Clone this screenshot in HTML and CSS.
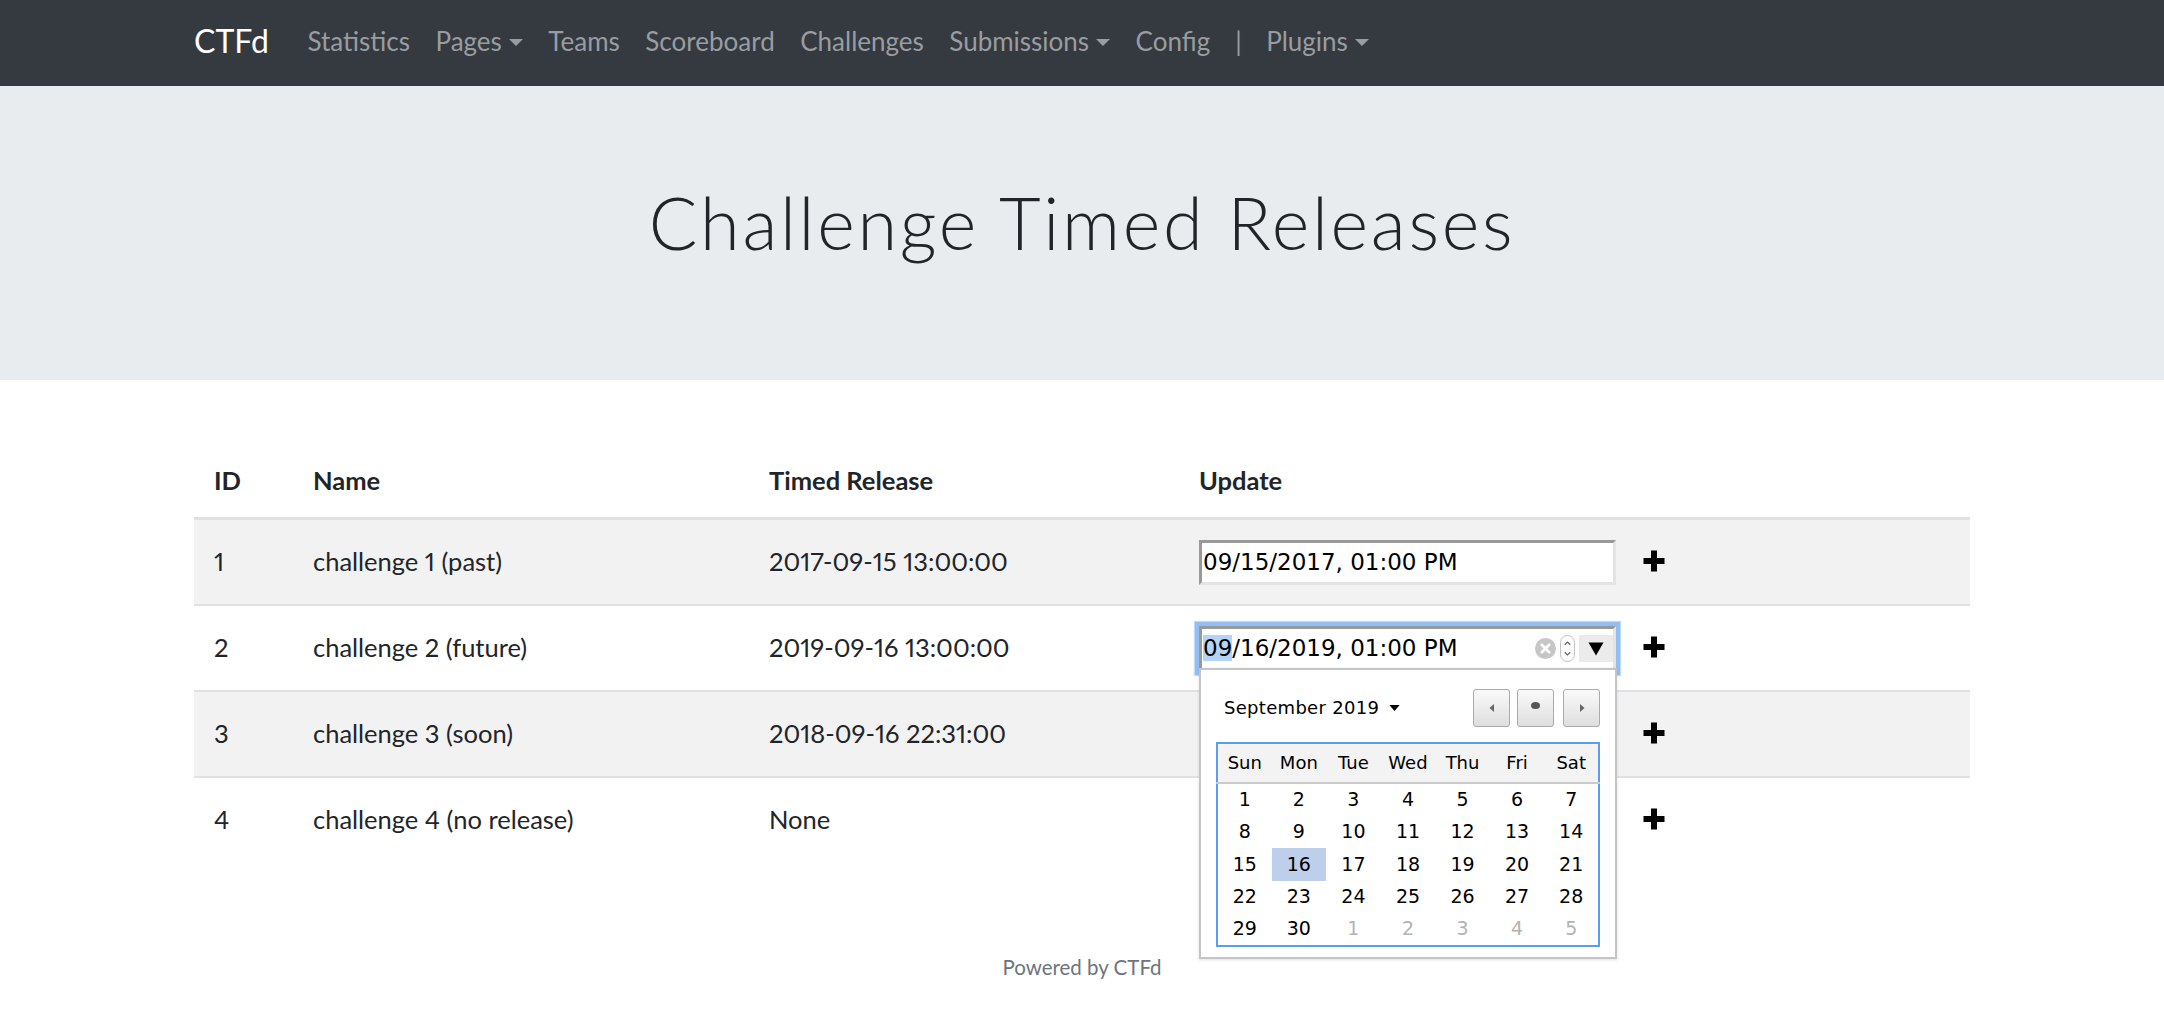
FILE: index.html
```html
<!DOCTYPE html>
<html lang="en">
<head>
<meta charset="utf-8">
<title>Challenge Timed Releases</title>
<link rel="stylesheet" href="styles.css">
</head>
<body>
<nav class="navbar">
  <div class="container nav-inner">
    <a class="brand" href="#">CTFd</a>
    <ul class="nav">
      <li><a href="#">Statistics</a></li>
      <li><a href="#" class="dropdown">Pages</a></li>
      <li><a href="#">Teams</a></li>
      <li><a href="#">Scoreboard</a></li>
      <li><a href="#">Challenges</a></li>
      <li><a href="#" class="dropdown">Submissions</a></li>
      <li><a href="#">Config</a></li>
      <li class="sep">|</li>
      <li><a href="#" class="dropdown">Plugins</a></li>
    </ul>
  </div>
</nav>

<header class="jumbotron">
  <h1>Challenge Timed Releases</h1>
</header>

<main class="container">
  <table class="releases">
    <thead>
      <tr>
        <th class="c-id">ID</th>
        <th class="c-name">Name</th>
        <th class="c-time">Timed Release</th>
        <th class="c-update">Update</th>
      </tr>
    </thead>
    <tbody>
      <tr>
        <td>1</td>
        <td>challenge 1 (past)</td>
        <td>2017-09-15 13:00:00</td>
        <td>
          <div class="update">
            <div class="date-input"><span class="val">09/15/2017, 01:00 PM</span></div>
            <svg class="plus" viewBox="0 0 24 24"><path d="M9 1.5h6v7.5h7.5v6H15v7.5H9V15H1.5V9H9z"/></svg>
          </div>
        </td>
      </tr>
      <tr>
        <td>2</td>
        <td>challenge 2 (future)</td>
        <td>2019-09-16 13:00:00</td>
        <td>
          <div class="update">
            <div class="date-input focused">
              <span class="val"><span class="sel">09</span>/16/2019, 01:00 PM</span>
              <span class="clear"><svg viewBox="0 0 20 20"><path d="M6.5 6.5l7 7M13.5 6.5l-7 7"/></svg></span>
              <span class="spin"><svg viewBox="0 0 14 26"><path d="M4 9l3-3 3 3M4 17l3 3 3-3"/></svg></span>
              <span class="drop"><svg viewBox="0 0 16 14"><path d="M0.5 0.5h15L8 13.5z"/></svg></span>

              <div class="picker">
                <div class="picker-head">
                  <span class="month">September 2019 <svg class="caret" viewBox="0 0 12 7"><path d="M0 0h12L6 7z"/></svg></span>
                  <div class="pbtns">
                    <span class="pbtn"><svg viewBox="0 0 8 10"><path d="M6 1v8L1.5 5z"/></svg></span>
                    <span class="pbtn"><svg viewBox="0 0 12 10"><ellipse cx="6" cy="5" rx="5" ry="4"/></svg></span>
                    <span class="pbtn"><svg viewBox="0 0 8 10"><path d="M2 1v8l4.5-4z"/></svg></span>
                  </div>
                </div>
                <table class="cal">
                  <thead>
                    <tr><th>Sun</th><th>Mon</th><th>Tue</th><th>Wed</th><th>Thu</th><th>Fri</th><th>Sat</th></tr>
                  </thead>
                  <tbody>
                    <tr><td>1</td><td>2</td><td>3</td><td>4</td><td>5</td><td>6</td><td>7</td></tr>
                    <tr><td>8</td><td>9</td><td>10</td><td>11</td><td>12</td><td>13</td><td>14</td></tr>
                    <tr><td>15</td><td class="today">16</td><td>17</td><td>18</td><td>19</td><td>20</td><td>21</td></tr>
                    <tr><td>22</td><td>23</td><td>24</td><td>25</td><td>26</td><td>27</td><td>28</td></tr>
                    <tr><td>29</td><td>30</td><td class="other">1</td><td class="other">2</td><td class="other">3</td><td class="other">4</td><td class="other">5</td></tr>
                  </tbody>
                </table>
              </div>
            </div>
            <svg class="plus" viewBox="0 0 24 24"><path d="M9 1.5h6v7.5h7.5v6H15v7.5H9V15H1.5V9H9z"/></svg>
          </div>
        </td>
      </tr>
      <tr>
        <td>3</td>
        <td>challenge 3 (soon)</td>
        <td>2018-09-16 22:31:00</td>
        <td>
          <div class="update">
            <div class="date-input hidden"></div>
            <svg class="plus" viewBox="0 0 24 24"><path d="M9 1.5h6v7.5h7.5v6H15v7.5H9V15H1.5V9H9z"/></svg>
          </div>
        </td>
      </tr>
      <tr>
        <td>4</td>
        <td>challenge 4 (no release)</td>
        <td>None</td>
        <td>
          <div class="update">
            <div class="date-input hidden"></div>
            <svg class="plus" viewBox="0 0 24 24"><path d="M9 1.5h6v7.5h7.5v6H15v7.5H9V15H1.5V9H9z"/></svg>
          </div>
        </td>
      </tr>
    </tbody>
  </table>
</main>

<footer class="footer">Powered by CTFd</footer>
</body>
</html>
```

FILE: styles.css
```css
* { box-sizing: border-box; }

html, body {
  margin: 0;
  padding: 0;
  background: #fff;
  color: #212529;
  font-family: "Lato", "Open Sans", sans-serif;
  font-variant-numeric: proportional-nums;
}

a { text-decoration: none; color: inherit; }

.container {
  width: 1776px;
  margin: 0 auto;
}

/* Navbar */
.navbar {
  background: #343a40;
  height: 86px;
}
.nav-inner {
  display: flex;
  align-items: center;
  height: 100%;
}
.brand {
  color: #fff;
  font-size: 32px;
  margin-right: 26px;
  line-height: 1;
  padding-bottom: 5px;
}
.nav {
  list-style: none;
  margin: 0;
  padding: 0;
  display: flex;
  align-items: center;
}
.nav li a, .nav .sep {
  display: block;
  color: #9a9da0;
  font-size: 26px;
  padding: 0 13px 4px 12.5px;
  line-height: 1;
}
.nav .sep { padding: 0 12px 4px 12px; }
.dropdown::after {
  content: "";
  display: inline-block;
  margin-left: 7px;
  vertical-align: 5px;
  border-top: 7px solid #9a9da0;
  border-left: 7px solid transparent;
  border-right: 7px solid transparent;
}

/* Jumbotron */
.jumbotron {
  background: #e9ecef;
  height: 294px;
  display: flex;
  align-items: center;
  justify-content: center;
}
.jumbotron h1 {
  margin: 0;
  font-family: "Lato", sans-serif;
  font-weight: 300;
  font-size: 72px;
  letter-spacing: 2.7px;
  color: #212529;
  padding-bottom: 22px;
}

/* Table */
.releases {
  width: 100%;
  border-collapse: collapse;
  margin-top: 54px;
  font-size: 25.5px;
}
.releases > thead > tr > th {
  text-align: left;
  font-weight: 700;
  padding: 28px 20px 19px 20px;
  line-height: 36px;
  border-bottom: 3px solid #dee2e6;
}
.c-id { width: 99px; }
.c-name { width: 456px; }
.c-time { width: 430px; }
.releases > tbody > tr > td {
  padding: 23px 20px 25px 20px;
  line-height: 36px;
  border-top: 2px solid #dee2e6;
  vertical-align: middle;
}
.releases > tbody > tr:first-child > td { border-top: none; }
.releases > tbody > tr:nth-child(odd) { background: #f2f2f2; }

.update {
  display: flex;
  align-items: center;
  gap: 26px;
}

.date-input {
  position: relative;
  width: 417px;
  height: 45px;
  margin: -3px 0 -6px 0;
  background: #fff;
  border-style: solid;
  border-width: 3px;
  border-color: #999 #e4e4e4 #e4e4e4 #999;
  display: flex;
  align-items: center;
  font-family: "DejaVu Sans", sans-serif;
  font-size: 23px;
  color: #000;
  padding-left: 1px;
}
.date-input.hidden { visibility: hidden; }
.date-input .val { flex: 1; line-height: 1; white-space: nowrap; }
.date-input.focused {
  box-shadow: 0 0 0 4px #91bff3, 0 0 1px 5px #c4dcf8;
}
.sel { background: #b4d3f6; }

.clear {
  width: 21px;
  height: 21px;
  border-radius: 50%;
  background: #c6c6c6;
  margin-right: 4px;
  display: flex;
}
.clear svg { width: 21px; height: 21px; stroke: #fff; stroke-width: 2.6; stroke-linecap: round; fill: none; }
.spin {
  width: 15px;
  height: 27px;
  border: 1px solid #c2c2c2;
  border-radius: 8px;
  margin-right: 4px;
  display: flex;
}
.spin svg { width: 13px; height: 25px; stroke: #666; stroke-width: 1.3; fill: none; }
.drop {
  width: 34px;
  height: 27px;
  background: #ebebeb;
  display: flex;
  align-items: center;
  justify-content: center;
}
.drop svg { width: 16px; height: 14px; fill: #000; }

.plus { width: 24px; height: 24px; fill: #000; flex: none; }

/* Date picker popup */
.picker {
  position: absolute;
  top: 100%;
  left: -3px;
  width: 418px;
  height: 291px;
  background: #fff;
  border: 2px solid #c4c4c4;
  box-shadow: 0 1px 3px rgba(0,0,0,0.12);
  z-index: 5;
  padding: 18px 15px 0 15px;
  font-family: "DejaVu Sans", sans-serif;
  color: #000;
  cursor: default;
}
.picker-head {
  display: flex;
  align-items: center;
  justify-content: space-between;
  height: 40px;
  margin-bottom: 14px;
}
.month {
  font-size: 18px;
  padding-left: 8px;
  display: flex;
  align-items: center;
  gap: 10px;
  letter-spacing: 0.3px;
}
.caret { width: 11px; height: 6px; fill: #000; }
.pbtns { display: flex; gap: 7px; }
.pbtn {
  width: 37px;
  height: 38px;
  border: 1.5px solid #ababab;
  border-radius: 3px;
  background: linear-gradient(#fafafa, #dedede);
  display: flex;
  align-items: center;
  justify-content: center;
}
.pbtn:nth-child(3) { margin-left: 2px; }
.pbtn svg { width: 8px; height: 10px; fill: #666; }
.pbtn:nth-child(2) svg { width: 11px; height: 9px; fill: #555; margin-top: -5px; }

.cal {
  width: 384px;
  border: 2px solid #5b9bf0;
  border-collapse: collapse;
  table-layout: fixed;
  font-size: 18px;
  background: #fff;
}
.cal th {
  font-weight: 400;
  background: #f3f3f3;
  height: 40px;
  border-bottom: 2px solid #cbcbcb;
  padding: 0;
  text-align: center;
  line-height: 1;
}
.cal td {
  height: 32.5px;
  padding: 0;
  text-align: center;
  font-size: 19px;
  line-height: 1;
  border: none;
}
.cal td.today { background: #bdcfea; }
.cal td.other { color: #b3b3b3; }

/* Footer */
.footer {
  text-align: center;
  color: #6c757d;
  font-size: 20.5px;
  margin-top: 93px;
}
```
